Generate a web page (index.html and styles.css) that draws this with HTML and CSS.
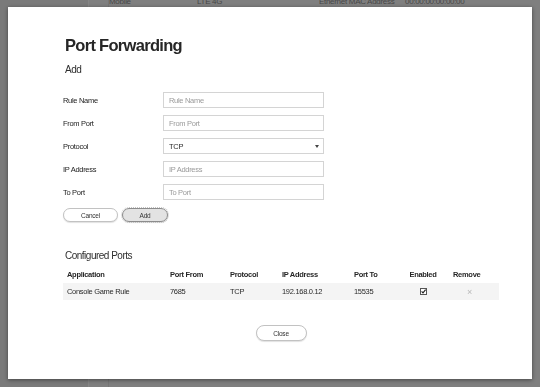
FILE: index.html
```html
<!DOCTYPE html>
<html lang="en">
<head>
  <meta charset="UTF-8" />
  <title>Port Forwarding</title>
  <link rel="stylesheet" href="styles.css">
</head>
<body>
  <div class="page">
    <aside class="side"></aside>
    <main class="page-main">
      <div class="info-row">
        <span class="c1">Mobile</span>
        <span class="c2">LTE 4G</span>
        <span class="c3">Ethernet MAC Address</span>
        <span class="c4">00:00:00:00:00:00</span>
      </div>
    </main>
  </div>

  <div class="overlay">
    <div class="modal">
      <h1>Port Forwarding</h1>
      <h2 class="sub-title">Add</h2>

      <form class="pf-form" onsubmit="return false;">
        <label for="rule-name">Rule Name</label>
        <input id="rule-name" type="text" placeholder="Rule Name">

        <label for="from-port">From Port</label>
        <input id="from-port" type="text" placeholder="From Port">

        <label for="protocol">Protocol</label>
        <div class="select-wrap">
          <select id="protocol">
            <option>TCP</option>
            <option>UDP</option>
            <option>Both</option>
          </select>
          <span class="caret"></span>
        </div>

        <label for="ip-address">IP Address</label>
        <input id="ip-address" type="text" placeholder="IP Address">

        <label for="to-port">To Port</label>
        <input id="to-port" type="text" placeholder="To Port">
      </form>

      <div class="form-actions">
        <button class="pill-btn cancel-btn">Cancel</button>
        <button class="pill-btn add-btn">Add</button>
      </div>

      <h2 class="sub-title configured">Configured Ports</h2>
      <table class="ports-table">
        <thead>
          <tr>
            <th class="col-app">Application</th>
            <th class="col-from">Port From</th>
            <th class="col-proto">Protocol</th>
            <th class="col-ip">IP Address</th>
            <th class="col-to">Port To</th>
            <th class="col-enabled">Enabled</th>
            <th class="col-remove">Remove</th>
          </tr>
        </thead>
        <tbody>
          <tr>
            <td>Console Game Rule</td>
            <td>7685</td>
            <td>TCP</td>
            <td>192.168.0.12</td>
            <td>15535</td>
            <td class="col-enabled">
              <svg class="check" width="7" height="7" viewBox="0 0 7 7">
                <rect x="0.5" y="0.5" width="6" height="6" fill="#fff" stroke="#555"/>
                <path d="M1.6 3.4 L3 4.9 L5.6 1.6" fill="none" stroke="#222" stroke-width="1.1"/>
              </svg>
            </td>
            <td class="col-remove"><span class="remove-x">&#215;</span></td>
          </tr>
        </tbody>
      </table>

      <div class="close-row">
        <button class="pill-btn close-btn">Close</button>
      </div>
    </div>
  </div>
</body>
</html>
```

FILE: styles.css
```css
body {
  margin: 0;
  font-family: "Liberation Sans", Arial, sans-serif;
  background-color: #7f7f7f;
  color: #333;
  overflow: hidden;
}

.page {
  display: flex;
  height: 387px;
}

.side {
  width: 88px;
  background-color: #7a7a7a;
  border-right: 1px solid #858585;
}

.page-main {
  flex: 1;
  border-left: 1px solid #767676;
  margin-left: 19px;
}

.info-row {
  display: flex;
  font-size: 8px;
  line-height: 10px;
  letter-spacing: -0.3px;
  color: #474747;
  margin-top: -3px;
  white-space: nowrap;
}

.info-row span {
  flex-shrink: 0;
}

.info-row .c1 { width: 88px; }
.info-row .c2 { width: 122px; }
.info-row .c3 { width: 86px; }

.overlay {
  position: fixed;
  top: 0;
  left: 0;
  right: 0;
  bottom: 0;
  padding: 7px 0 0 8px;
}

.modal {
  width: 524px;
  height: 372px;
  box-sizing: border-box;
  background: white;
  padding: 28px 33px 0 55px;
  box-shadow: 0 1px 4px rgba(0, 0, 0, 0.45);
}

h1 {
  margin: 0 0 0 2px;
  font-size: 16.5px;
  line-height: 20px;
  letter-spacing: -0.7px;
  font-weight: bold;
  color: #262626;
}

.sub-title {
  margin: 8px 0 0 2px;
  font-size: 10px;
  line-height: 13px;
  letter-spacing: -0.5px;
  font-weight: normal;
  color: #2e2e2e;
}

.pf-form {
  display: grid;
  grid-template-columns: 100px 161px;
  row-gap: 7px;
  align-items: center;
  margin-top: 16px;
}

.pf-form label {
  font-size: 7.5px;
  letter-spacing: -0.3px;
  color: #222;
}

.pf-form input,
.pf-form select {
  display: block;
  width: 161px;
  height: 16px;
  box-sizing: border-box;
  border: 1px solid #d4d4d4;
  padding: 0 5px;
  font-family: inherit;
  font-size: 7.5px;
  letter-spacing: -0.3px;
  color: #2a2a2a;
  background: white;
  outline: none;
}

.pf-form input::placeholder {
  color: #9a9a9a;
}

.select-wrap {
  position: relative;
  height: 16px;
}

.pf-form select {
  -webkit-appearance: none;
  appearance: none;
  border-radius: 0;
}

.caret {
  position: absolute;
  right: 5px;
  top: 7px;
  width: 0;
  height: 0;
  border-left: 2px solid transparent;
  border-right: 2px solid transparent;
  border-top: 3px solid #444;
}

.form-actions {
  display: flex;
  gap: 4px;
  margin-top: 8px;
}

.pill-btn {
  height: 14px;
  padding: 0;
  border: 1px solid #c2c2c2;
  border-radius: 8px;
  background: white;
  font-family: inherit;
  font-size: 6.5px;
  letter-spacing: -0.2px;
  color: #333;
  box-shadow: 0 1px 1px rgba(0, 0, 0, 0.12);
  cursor: pointer;
}

.cancel-btn {
  width: 55px;
}

.add-btn {
  width: 46px;
  background-color: #e3e3e3;
  border-color: #8c8c8c;
  outline: 1px dotted #c4c4c4;
  outline-offset: 0;
}

.configured {
  margin-top: 27px;
}

.ports-table {
  width: 436px;
  table-layout: fixed;
  border-collapse: collapse;
  margin-top: 4px;
  font-size: 7.5px;
  letter-spacing: -0.3px;
}

.ports-table th,
.ports-table td {
  height: 17px;
  padding: 0 4px;
  text-align: left;
  color: #2a2a2a;
}

.ports-table th {
  font-weight: bold;
  color: #262626;
}

.ports-table tbody tr {
  background-color: #f4f4f4;
}

.col-app { width: 95px; }
.col-from { width: 52px; }
.col-proto { width: 44px; }
.col-ip { width: 64px; }
.col-to { width: 42px; }

.ports-table .col-enabled {
  width: 38px;
  text-align: center;
}

.ports-table .col-remove {
  padding-left: 7px;
}

.check {
  display: block;
  margin: 0 auto;
}

.remove-x {
  color: #b8b8b8;
  font-size: 9px;
  margin-left: 14px;
}

.close-row {
  display: flex;
  justify-content: center;
  width: 436px;
  margin-top: 25px;
}

.close-btn {
  width: 51px;
  height: 16px;
}
```
